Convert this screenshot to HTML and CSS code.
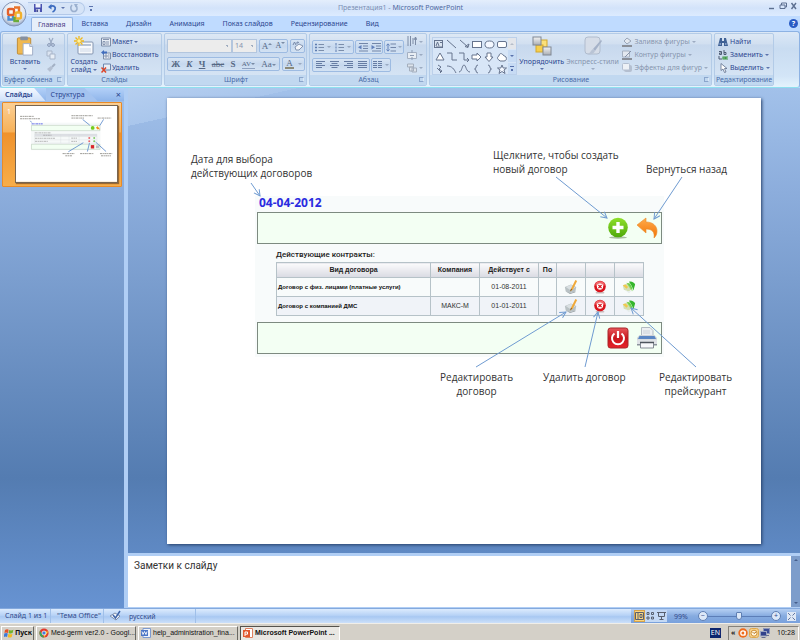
FILE: index.html
```html
<!DOCTYPE html>
<html lang="ru">
<head>
<meta charset="utf-8">
<title>Презентация1 - Microsoft PowerPoint</title>
<link rel="stylesheet" href="styles.css">
</head>
<body>
<svg class="defs" width="0" height="0" aria-hidden="true">
  <defs>
    <linearGradient id="gGreen" x1="0" y1="0" x2="0" y2="1"><stop offset="0" stop-color="#8fe02a"/><stop offset="1" stop-color="#4fa80a"/></linearGradient>
    <linearGradient id="gOrange" x1="0" y1="0" x2="0" y2="1"><stop offset="0" stop-color="#ffab4c"/><stop offset="1" stop-color="#f27405"/></linearGradient>
    <linearGradient id="gRed" x1="0" y1="0" x2="0" y2="1"><stop offset="0" stop-color="#e8585c"/><stop offset=".5" stop-color="#c8161c"/><stop offset="1" stop-color="#e8242a"/></linearGradient>
    <radialGradient id="gOrb" cx=".5" cy=".35" r=".65"><stop offset="0" stop-color="#ffffff"/><stop offset=".7" stop-color="#dfe5ef"/><stop offset="1" stop-color="#93a5c4"/></radialGradient>
    <linearGradient id="gGrey" x1="0" y1="0" x2="0" y2="1"><stop offset="0" stop-color="#f4f4f4"/><stop offset="1" stop-color="#a9adb3"/></linearGradient>
    <marker id="tip" viewBox="0 0 8 8" refX="7" refY="4" markerWidth="8" markerHeight="8" markerUnits="userSpaceOnUse" orient="auto"><path d="M1 0.8 7 4 1 7.2" fill="none" stroke="#6f9bd1" stroke-width="1"/></marker>
    <symbol id="edit" viewBox="0 0 16 16"><path d="M1 8 8 5l6 3-1 5-7 2-4-2z" fill="#b9c1c4"/><path d="M2 8 8 5.500l5 3-6 3z" fill="#d9dfe2"/><path d="M2 13l5 2 6-2v1l-6 2z" fill="#8f989c"/><path d="M13 0 8 10l-1 3 3-2L15 1z" fill="#f0a838"/><path d="M8 10l-1 3 2-2z" fill="#504030"/></symbol>
    <symbol id="del" viewBox="0 0 16 16"><ellipse cx="8" cy="14.500" rx="5" ry="1" fill="#c9baba"/><circle cx="8" cy="7.500" r="6.600" fill="#d9131d"/><path d="M2.500 6a5.600 5.600 0 0 1 11 0c-3 2-8 2-11 0z" fill="#f0676c"/><circle cx="8" cy="7.500" r="3.600" fill="#fff"/><path d="M6.200 5.700l3.600 3.600M9.800 5.700 6.200 9.300" stroke="#d9131d" stroke-width="1.400"/></symbol>
    <symbol id="price" viewBox="0 0 16 16"><path d="M1 6 6 4l6 5-4 4-6-2z" fill="#d3dfb4"/><path d="M1 6l3-1 3 3-2 2z" fill="#f2c84c"/><path d="M5 3l4 1 2 9-3-5z" fill="#9fd46b"/><path d="M8 2c3-1 6 1 7 3l-2 7c-1-4-3-7-5-10z" fill="#35b52d"/><path d="M6 4c3-1 6 3 6 9C10 9 8 6 6 4z" fill="#67d24a"/><path d="M4 12l4 1 3-1-3 3z" fill="#e5ecec"/></symbol>
    <symbol id="wflag" viewBox="0 0 10 10"><path d="M1 2q2-1.500 3.600-.3L4 5Q2 4 .4 5z" fill="#e5532a"/><path d="M5.200 2q2 1 4.200-.3L8.600 5q-2 1-4-.1z" fill="#6fb32c"/><path d="M.3 5.500q2-1 3.500 0L3 9Q1.500 8-.2 9z" fill="#3a78d8"/><path d="M4.400 5.700q2 1 4.100 0L7.700 9Q5.500 10 3.700 9z" fill="#f3bb22"/></symbol>
  </defs>
</svg>

<div class="app">
  <header class="titlebar">
    <div class="quick">
      <button aria-label="Сохранить"><svg width="10" height="10" viewBox="0 0 10 10"><path d="M1 1h8v8H1z" fill="#4a53b0"/><path d="M2.500 1h5v3.500h-5z" fill="#eef2fc"/><path d="M3 6h4v3H3z" fill="#cfd6ee"/><path d="M3.500 6.500h1.300V9H3.500z" fill="#27307c"/></svg></button>
      <button aria-label="Отменить"><svg width="10" height="10" viewBox="0 0 10 10"><path d="M3 3.500C7 2 9 4 8 6.500 7.500 8 6.500 8.600 5.500 9" fill="none" stroke="#3d6cc0" stroke-width="1.800"/><path d="M1 4 4.500 1v5.500z" fill="#3d6cc0"/></svg></button>
      <i class="caret"></i>
      <button aria-label="Повторить"><svg width="10" height="10" viewBox="0 0 10 10"><path d="M3 2C1 4 1.500 8.500 5 8.500S9 4 6.500 2.500" fill="none" stroke="#9bb0cf" stroke-width="1.600"/><path d="M5 1h4L6.500 4.500z" fill="#9bb0cf"/></svg></button>
    </div>
    <i class="caret bar"></i>
    <h1>Презентация1 - <b>Microsoft PowerPoint</b></h1>
    <div class="winbtns">
      <button aria-label="Свернуть"><svg width="8" height="8" viewBox="0 0 8 8"><path d="M1 6.500h5" stroke="#5c6f90" stroke-width="1.400"/></svg></button>
      <button aria-label="Восстановить окно"><svg width="8" height="8" viewBox="0 0 8 8"><path d="M2.500 3V1h5v4H6M1 3h5v3.500H1z" fill="none" stroke="#5c6f90"/></svg></button>
      <button aria-label="Закрыть"><svg width="8" height="8" viewBox="0 0 8 8"><path d="M1.500 1l4.500 6M6 1 1.500 7" stroke="#5c6f90" stroke-width="1.400"/></svg></button>
    </div>
  </header>

  <button class="orb" aria-label="Кнопка Office"><svg width="26" height="26" viewBox="0 0 26 26"><circle cx="13" cy="13" r="12" fill="url(#gOrb)" stroke="#8496b8"/><g fill="none" stroke-width="2.400"><rect x="7" y="8" width="6" height="6" rx="1.500" stroke="#e2602b"/><path d="M13 6.500h5V12" stroke="#e8742a"/><rect x="14.500" y="11.500" width="5.500" height="6" rx="1.500" stroke="#f1b02c"/><path d="M7.500 15v3.500H12V15" stroke="#4a8bd0"/><path d="M13.500 16v4H18" stroke="#6bab3a"/></g></svg></button>

  <nav class="tabs">
    <a class="on" href="#">Главная</a><a href="#">Вставка</a><a href="#">Дизайн</a><a href="#">Анимация</a><a href="#">Показ слайдов</a><a href="#">Рецензирование</a><a href="#">Вид</a>
    <button class="help" aria-label="Справка">?</button>
  </nav>

  <div class="ribbon">
    <section class="group g-clip">
      <div class="body">
        <button class="big"><svg width="18" height="21" viewBox="0 0 18 21"><rect x="1" y="2" width="14" height="17" rx="1" fill="#efb850" stroke="#c08a34"/><rect x="4" y="0.500" width="8" height="4" rx="1" fill="#8690a0"/><path d="M7 8h7l3 3v9H7z" fill="#fff" stroke="#a0aec6"/><path d="M14 8v3h3" fill="#dce4f2" stroke="#a0aec6"/></svg><span>Вставить</span><i class="caret"></i></button>
        <div class="stack off">
          <button aria-label="Вырезать"><svg width="10" height="10" viewBox="0 0 10 10"><path d="M3 1l3 6M7 1 4 7" stroke="#9aa9c2" stroke-width="1.200"/><circle cx="3" cy="8" r="1.400" fill="none" stroke="#8898b5"/><circle cx="7" cy="8" r="1.400" fill="none" stroke="#8898b5"/></svg></button>
          <button aria-label="Копировать"><svg width="10" height="10" viewBox="0 0 10 10"><path d="M1 1h5v5H1z" fill="#dbe4f1" stroke="#a8b5c9"/><path d="M4 4h5v5H4z" fill="#e8eef6" stroke="#a8b5c9"/></svg></button>
          <button aria-label="Формат по образцу"><svg width="10" height="10" viewBox="0 0 10 10"><path d="M9 1 6 4" stroke="#a3b0c5" stroke-width="2"/><path d="M1 6l4-3 2 2-3 4z" fill="#b3bfd1"/></svg></button>
        </div>
      </div>
      <h2>Буфер обмена<i class="launch"></i></h2>
    </section>

    <section class="group g-slides">
      <div class="body">
        <button class="big"><svg width="20" height="20" viewBox="0 0 20 20"><rect x="4" y="6" width="15" height="12" rx="1" fill="#f7f9fc" stroke="#8495b0"/><path d="M6 8h11v2H6z" fill="#b6c3d6"/><path d="M6 12h11v4H6z" fill="#e2e8f1"/><path d="M5 0v10M0 5h10M1.500 1.500l7 7M8.500 1.500l-7 7" stroke="#f0b81c" stroke-width="1.300"/><circle cx="5" cy="5" r="1.800" fill="#fff3a0"/></svg><span>Создать<br>слайд <i class="caret"></i></span></button>
        <div class="stack">
          <button><svg width="10" height="10" viewBox="0 0 10 10"><path d="M.5 1h9v8h-9z" fill="#e8edf5" stroke="#7d8da8"/><path d="M2 2.500h6M2 4.500h2v3H2zM5 5h3M5 7h3" stroke="#8796b0" fill="none"/></svg>Макет <i class="caret"></i></button>
          <button><svg width="10" height="10" viewBox="0 0 10 10"><path d="M2.500 3h7v6h-7z" fill="#e8edf5" stroke="#7d8da8"/><path d="M4 5h2v2H4zM7 5h1.500M7 7h1.500" stroke="#8796b0" fill="none"/><path d="M0 2.500 3 0v1.500h3v2H3V5z" fill="#416dbd"/></svg>Восстановить</button>
          <button><svg width="10" height="10" viewBox="0 0 10 10"><path d="M2.500 1h7v6h-7z" fill="#e8edf5" stroke="#6d86ae"/><path d="M.5 4.500l4.500 5M5 4.500l-4.500 5" stroke="#dd4326" stroke-width="1.500"/></svg>Удалить</button>
        </div>
      </div>
      <h2>Слайды</h2>
    </section>

    <section class="group g-font">
      <div class="rows off">
        <div class="row">
          <select class="face" aria-label="Шрифт"><option></option></select><select class="size" aria-label="Размер шрифта"><option>14</option></select>
          <span class="set wide"><button class="ser">A<i class="caret up"></i></button><button class="ser sm">A<i class="caret"></i></button></span>
          <span class="set"><button aria-label="Очистить формат"><svg width="12" height="10" viewBox="0 0 12 10"><path d="M3 6l4-3 4 2-4 4H4z" fill="#f2f5fa" stroke="#8494b0"/><path d="M1 4l1.500-3L4 4M5 3V1l2 .5" fill="none" stroke="#7587a8"/></svg></button></span>
        </div>
        <div class="row">
          <span class="set style"><button class="ser"><b>Ж</b></button><button class="ser"><b><em>К</em></b></button><button class="ser"><b><u>Ч</u></b></button><button class="ser"><s>abe</s></button><button class="ser"><b>S</b></button><button class="ser tiny">AV<i class="caret"></i></button><button class="ser">Aa<i class="caret"></i></button></span>
          <span class="set color"><button class="ser"><span class="ink">A</span></button><i class="caret"></i></span>
        </div>
      </div>
      <h2>Шрифт<i class="launch"></i></h2>
    </section>

    <section class="group g-para">
      <div class="body off">
        <div class="rows">
          <div class="row">
            <span class="set w42"><button aria-label="Маркеры"><svg width="9" height="9" viewBox="0 0 9 9"><path d="M0 1.500h2M0 4.500h2M0 7.500h2" stroke="#5e7cb0" stroke-width="1.600"/><path d="M3.500 1.500H9M3.500 4.500H9M3.500 7.500H9" stroke="#7b8eab"/></svg></button><i class="caret"></i><button aria-label="Нумерация"><svg width="9" height="9" viewBox="0 0 9 9"><path d="M1 0v2.500M1 3.500v2M1 6.500V9" stroke="#5e7cb0"/><path d="M3.500 1.500H9M3.500 4.500H9M3.500 7.500H9" stroke="#7b8eab"/></svg></button><i class="caret"></i></span>
            <span class="set w28"><button aria-label="Уменьшить отступ"><svg width="10" height="9" viewBox="0 0 10 9"><path d="M1 .5h9M5 3h5M5 5.500h5M1 8h9" stroke="#7286a8"/><path d="M0 4.200 3.500 2v4.500z" fill="#6181bb"/></svg></button><button aria-label="Увеличить отступ"><svg width="10" height="9" viewBox="0 0 10 9"><path d="M1 .5h9M5 3h5M5 5.500h5M1 8h9" stroke="#7286a8"/><path d="M4 4.200.5 2v4.500z" fill="#6181bb"/></svg></button></span>
            <span class="set w20"><button aria-label="Интервал"><svg width="10" height="9" viewBox="0 0 10 9"><path d="M4.500 1H10M4.500 4.500H10M4.500 8H10" stroke="#7286a8"/><path d="M2 1v7M.5 2.500 2 .8l1.500 1.700M.5 6.500 2 8.200l1.500-1.700" fill="none" stroke="#6181bb"/></svg></button><i class="caret"></i></span>
          </div>
          <div class="row">
            <span class="set w58"><button aria-label="По левому краю"><svg width="9" height="8" viewBox="0 0 9 8"><path d="M0 .5h9M0 2.500h6M0 4.500h9M0 6.500h6" stroke="#667ca3"/></svg></button><button aria-label="По центру"><svg width="9" height="8" viewBox="0 0 9 8"><path d="M0 .5h9M1.500 2.500h6M0 4.500h9M1.500 6.500h6" stroke="#667ca3"/></svg></button><button aria-label="По правому краю"><svg width="9" height="8" viewBox="0 0 9 8"><path d="M0 .5h9M3 2.500h6M0 4.500h9M3 6.500h6" stroke="#667ca3"/></svg></button><button aria-label="По ширине"><svg width="9" height="8" viewBox="0 0 9 8"><path d="M0 .5h9M0 2.500h9M0 4.500h9M0 6.500h9" stroke="#667ca3"/></svg></button></span>
            <span class="set w20"><button aria-label="Колонки"><svg width="9" height="8" viewBox="0 0 9 8"><path d="M0 .5h4M0 2.500h4M0 4.500h4M0 6.500h4M5 .5h4M5 2.500h4M5 4.500h4M5 6.500h4" stroke="#667ca3"/></svg></button><i class="caret"></i></span>
          </div>
        </div>
        <div class="stack">
          <button aria-label="Направление текста"><svg width="10" height="11" viewBox="0 0 10 11"><path d="M1 0v10M3.500 0v10M6 2v6M8.500 1v8M7 4l1.500-3L10 4" fill="none" stroke="#7d8ca6"/></svg><i class="caret"></i></button>
          <button aria-label="Выровнять текст"><svg width="10" height="10" viewBox="0 0 10 10"><path d="M.5 2.500h9v6h-9z" fill="#e8edf3" stroke="#a4b0c2"/><path d="M5 0v3M5 7v3M3 5.500h4" stroke="#8c9bb3"/></svg><i class="caret"></i></button>
          <button aria-label="SmartArt"><svg width="10" height="10" viewBox="0 0 10 10"><path d="M.5 1h6v3h-6zM2.500 4h4v4h-4zM5 5h4.500v4H5z" fill="#dde4ec" stroke="#a4aebd"/></svg><i class="caret"></i></button>
        </div>
      </div>
      <h2>Абзац<i class="launch"></i></h2>
    </section>

    <section class="group g-draw">
      <div class="body">
        <div class="gallery">
          <svg width="75" height="37" viewBox="0 0 75 37" fill="none" stroke="#66748e" role="img" aria-label="Фигуры"><rect x="1.500" y="2.500" width="8" height="7" fill="#dce6f2"/><path d="M3 8l1.500-4L6 8M7 4.500h2M3 9h6M14 2l9 8M27 2l8 7M35 9.500l1-3.500-4 2.500z"/><rect x="39.500" y="3.500" width="9" height="6" fill="#fff"/><ellipse cx="56.500" cy="6.500" rx="4.500" ry="3.500" fill="#f4f8ff"/><rect x="64.500" y="3.500" width="9" height="6" rx="1.500" fill="#fff"/><path d="M3 22l4-7 4 7z" fill="#fff"/><path d="M14 15h5v7h5M26 15h5v7h4M34 20l2 2-2 2"/><path d="M39 17h5v-2l4 4-4 4v-2h-5z" fill="#fff"/><path d="M54 15h4v4h2l-4 4.500-4-4.500h2z" fill="#fff"/><path d="M66 22c-2-1-2-3 0-4 0-3 3-3 4-1l3 2c1 2 0 4-2 4h-4z" fill="#fff"/><path d="M5 27l3 2-2 2 3 2-2 2M4 30l4 4M14 28c5 0 7 3 9 7M26 34c3 0 3-7 5-7s2 7 6 7M45 27c-3 0-1 4-3.500 4 2.500 0 .5 4 3.500 4M55 27c3 0 1 4 3.500 4-2.500 0-.5 4-3.500 4"/><path d="M69 27l1.200 3h3.300l-2.500 2 1 3.500-3-2-3 2 1-3.500-2.500-2h3.300z" fill="#f4f8ff"/></svg>
          <div class="scroll"><button aria-label="Вверх"><i class="caret up"></i></button><button aria-label="Вниз"><i class="caret"></i></button><button aria-label="Ещё"><i class="caret bar"></i></button></div>
        </div>
        <button class="big"><svg width="20" height="20" viewBox="0 0 20 20"><rect x="8" y="4" width="7" height="7" fill="#fbe07a" stroke="#d2a72f"/><rect x="4" y="9" width="7" height="7" fill="#f7cf4c" stroke="#d2a72f"/><rect x="1" y="1" width="8" height="8" fill="url(#gGrey)" stroke="#808894"/><rect x="11" y="11" width="8" height="8" fill="url(#gGrey)" stroke="#808894"/></svg><span>Упорядочить</span><i class="caret"></i></button>
        <button class="big off"><svg width="20" height="20" viewBox="0 0 20 20"><rect x="2" y="1" width="15" height="17" rx="3" fill="#d6dde8" stroke="#b0bccd"/><path d="M18 4l1 1-7 10-2-2z" fill="#a5b2c8"/><path d="M10 13l2 2c-1 3-5 4-8 3 3 0 4-4 6-5z" fill="#b9c4d5"/></svg><span>Экспресс-стили</span><i class="caret"></i></button>
        <div class="stack off">
          <button><svg width="10" height="10" viewBox="0 0 10 10"><path d="M2 4l3-3 4 3-4 3z" fill="#e3e8ef" stroke="#9aa6b8"/><path d="M0 8h10v2H0z" fill="#8a8f98"/></svg>Заливка фигуры <i class="caret"></i></button>
          <button><svg width="10" height="10" viewBox="0 0 10 10"><path d="M.5 1h7v6h-7z" fill="#e3e8ef" stroke="#a5b0c0"/><path d="M9 1 3 7" stroke="#8592a8"/><path d="M0 8h10v2H0z" fill="#8a8f98"/></svg>Контур фигуры <i class="caret"></i></button>
          <button><svg width="10" height="10" viewBox="0 0 10 10"><rect x="2" y="2" width="8" height="7" rx="2" fill="#b4bfd0"/><rect x=".5" y=".5" width="7" height="6.500" rx="1" fill="#eef1f6" stroke="#b4bfd0"/></svg>Эффекты для фигур <i class="caret"></i></button>
        </div>
      </div>
      <h2>Рисование<i class="launch"></i></h2>
    </section>

    <section class="group g-edit">
      <div class="body">
        <div class="stack">
          <button><svg width="10" height="10" viewBox="0 0 10 10"><path d="M2 1h2v3h2V1h2l2 8H6V6H4v3H0z" fill="#3f6195"/><path d="M1.500 7h1.500M7 7h1.500" stroke="#c5d8f5"/></svg>Найти</button>
          <button><svg width="10" height="10" viewBox="0 0 10 10"><path d="M1 1.500h2.500v3H1.500V3h2M6 0v4.500h2V2.500H6" fill="none" stroke="#4d5b73"/><path d="M1 6v3h3" fill="none" stroke="#4d5b73"/><path d="M5 7h2v2H5zM10 7H8v2h2" fill="none" stroke="#3f9a46" stroke-width="1.200"/></svg>Заменить <i class="caret"></i></button>
          <button><svg width="10" height="10" viewBox="0 0 10 10"><path d="M3 .5v7L5 6l1.500 3.500L8 9 6.500 5.500H9z" fill="#fff" stroke="#5d6d8c" stroke-width=".8"/></svg>Выделить <i class="caret"></i></button>
        </div>
      </div>
      <h2>Редактирование</h2>
    </section>
  </div>

  <main class="work">
    <aside class="outline">
      <div class="panes">
        <button class="on">Слайды</button><button>Структура</button>
        <button class="close" aria-label="Закрыть панель">×</button>
      </div>
      <div class="thumb">
        <span>1</span>
        <svg viewBox="0 0 594 446" role="img" aria-label="Слайд 1">
          <rect width="594" height="446" fill="#fff"/><rect x="88" y="98" width="409" height="162" fill="#f6f9f9"/>
          <g fill="#f2fff2" stroke="#b4c8b4" stroke-width="3"><path d="M91 114h403v31H91zM91 225h403v30H91z"/></g>
          <path d="M110 165h366v14H110z" fill="#dddfe4"/><path d="M110 165h366v53H110zM110 180h366M110 199h366M263 165v53M312 165v53M371 165v53" fill="none" stroke="#d6dade" stroke-width="2"/>
          <g stroke-width="5" stroke-dasharray="13 3 7 3"><path d="M24 61h82M24 75h120M326 57h125M326 71h74M480 71h80M274 280h70M290 293h40M377 280h80M494 280h72M500 293h58" stroke="#8c8a84"/><path d="M92 105h66" stroke="#4a55e8"/><path d="M110 158h96M160 172h50M112 190h120M112 208h75M325 189h34M325 208h34" stroke="#999" stroke-width="4"/></g>
          <g stroke="#5f8dcc" stroke-width="5"><path d="M84 87l8 10M392 79l42 34M515 79l-22 36M308 269l88-53M420 268l12-50M530 268l-62-56"/></g>
          <circle cx="451" cy="129" r="11" fill="#74cc1c"/><path d="M470 128l12-10v6q12 4 9 18-5-8-9-7v5z" fill="#f68a1c"/><path d="M440 230h20v20h-20z" fill="#d8242a"/><path d="M470 232h18v16h-18z" fill="#b8bec4"/>
          <g fill="#e8686c"><circle cx="431" cy="188" r="6"/><circle cx="431" cy="207" r="6"/></g><g fill="#7fcc6a"><circle cx="460" cy="188" r="6"/><circle cx="460" cy="207" r="6"/></g>
        </svg>
      </div>
    </aside>

    <div class="editor">
      <div class="stage">
        <article class="slide">
          <div class="shot">
            <p class="date">04-04-2012</p>
            <div class="bar">
              <svg width="22" height="22" viewBox="0 0 22 22"><ellipse cx="11" cy="20.500" rx="9" ry="1.200" fill="#a9bda0"/><circle cx="11" cy="10.500" r="9.800" fill="url(#gGreen)"/><path d="M11 5v11M5.500 10.500h11" stroke="#fff" stroke-width="3.400"/></svg>
              <svg width="22" height="22" viewBox="0 0 22 22"><path d="M1 8 10 1v4c7 0 11 4 11 9 0 3-1 5-3 7 1-6-2-9-8-9v4z" fill="url(#gOrange)" stroke="#ea8a2a" stroke-width=".6"/></svg>
            </div>
            <table>
              <caption>Действующие контракты:</caption>
              <thead><tr><th class="kind">Вид договора</th><th class="firm">Компания</th><th class="from">Действует с</th><th class="to">По</th><th class="act"></th><th class="act"></th><th class="act"></th></tr></thead>
              <tbody>
                <tr><td class="name">Договор с физ. лицами (платные услуги)</td><td></td><td>01-08-2011</td><td></td><td><svg><use href="#edit"/></svg></td><td><svg><use href="#del"/></svg></td><td><svg><use href="#price"/></svg></td></tr>
                <tr><td class="name">Договор с компанией ДМС</td><td>МАКС-М</td><td>01-01-2011</td><td></td><td><svg><use href="#edit"/></svg></td><td><svg><use href="#del"/></svg></td><td><svg><use href="#price"/></svg></td></tr>
              </tbody>
            </table>
            <div class="bar">
              <svg width="22" height="22" viewBox="0 0 22 22"><rect x="1" y="1" width="20" height="20" rx="2.500" fill="url(#gRed)" stroke="#a8262a"/><path d="M7.500 6.500a6 6 0 1 0 7 0" fill="none" stroke="#fff" stroke-width="2"/><path d="M11 4v7" stroke="#fff" stroke-width="2.200"/></svg>
              <svg width="22" height="22" viewBox="0 0 22 22"><path d="M5.500.5H14l3 3V11H5.500z" fill="#eceff2" stroke="#b3bac2"/><path d="M7 4h7M7 6h7" stroke="#ccd2d8"/><path d="M3.500 8 1 11v6h20v-6l-2.500-3z" fill="#cfd3d8"/><path d="M3.500 9h15l1.500 3H2z" fill="#5a86c4"/><path d="M1 12.500h20V18H1z" fill="#dfe2e6"/><path d="M1 17h20v1.500H1z" fill="#8b929b"/><path d="M4.500 15.500h13V21h-13z" fill="#f7f8fa" stroke="#848b94"/><path d="M4 15.500h14" stroke="#4d545c" stroke-width="1.500"/></svg>
            </div>
          </div>
          <p class="note n1">Дата для выбора<br>действующих договоров</p>
          <p class="note n2">Щелкните, чтобы создать<br>новый договор</p>
          <p class="note n3">Вернуться назад</p>
          <p class="note mid n4">Редактировать<br>договор</p>
          <p class="note mid n5">Удалить договор</p>
          <p class="note mid n6">Редактировать<br>прейскурант</p>
          <svg class="arrows" width="594" height="446" viewBox="0 0 594 446" fill="none" stroke="#6f9bd1"><g marker-end="url(#tip)"><path d="M84 85 93 98" /><path d="M389 79 440 120"/><path d="M515 79 487 121"/><path d="M309 269 399 214"/><path d="M418 269 431 214"/><path d="M529 269 464 210"/></g></svg>
        </article>
      </div>
      <div class="notes"><textarea aria-label="Заметки">Заметки к слайду</textarea><div class="vbar"><i class="caret up"></i><i class="caret"></i></div></div>
    </div>
  </main>

  <footer class="status">
    <span class="s1">Слайд 1 из 1</span><span class="s2">"Тема Office"</span>
    <span class="s3"><svg width="12" height="12" viewBox="0 0 12 12"><path d="M1 6l5-3 5 3-4 4z" fill="#f0f4fa" stroke="#7f8fac"/><path d="M4 5l2.500 3L11 1" fill="none" stroke="#3d63a8" stroke-width="1.500"/></svg>русский</span>
    <div class="view">
      <button class="on" aria-label="Обычный"><svg width="9" height="8" viewBox="0 0 9 8"><path d="M.5.5h8v7h-8zM3 .5v7M5 2.500h2v3H5z" fill="none" stroke="#59606e"/></svg></button>
      <button aria-label="Сортировщик"><svg width="9" height="8" viewBox="0 0 9 8"><path d="M1 .5h2v2H1zM5.500.5h2v2h-2zM1 5h2v2H1zM5.500 5h2v2h-2z" fill="none" stroke="#59606e"/></svg></button>
      <button aria-label="Показ"><svg width="9" height="8" viewBox="0 0 9 8"><path d="M0 .5h9M1.500 1v3.500h6V1M4.500 4.500V7M2.500 7.500h4" fill="none" stroke="#59606e"/></svg></button>
      <span class="pct">99%</span>
      <button class="round" aria-label="Уменьшить">−</button>
      <input type="range" aria-label="Масштаб" value="49">
      <button class="round" aria-label="Увеличить">+</button>
      <button class="fit" aria-label="Вписать"><svg width="9" height="9" viewBox="0 0 9 9"><path d="M0 0h9v9H0z" fill="#dfe8f5"/><path d="M1 1l2.500 2.500M8 1 5.500 3.500M1 8l2.500-2.500M8 8 5.500 5.500" stroke="#6074a0"/></svg></button>
    </div>
  </footer>

  <div class="taskbar">
    <button class="start"><svg width="10" height="10"><use href="#wflag"/></svg>Пуск</button>
    <button class="task"><svg width="10" height="10" viewBox="0 0 10 10"><circle cx="5" cy="5" r="4.600" fill="#e33b2e"/><path d="M1 2.800 5 9.600A4.600 4.600 0 0 1 1 2.800z" fill="#3aa757"/><path d="M5 9.600 9.400 3.500H5z" fill="#f9c52b"/><circle cx="5" cy="5" r="2" fill="#3f7de0" stroke="#fff" stroke-width=".7"/></svg><span>Med-germ ver2.0 - Googl...</span></button>
    <button class="task"><svg width="10" height="10" viewBox="0 0 10 10"><path d="M2 .5h7.500v9H2z" fill="#eef3fb" stroke="#7e9bd0"/><path d="M0 2h7v6H0z" fill="#4b76c6"/><path d="M1 3.500l1 3 1.500-3 1.500 3 1-3" fill="none" stroke="#fff" stroke-width=".9"/></svg><span>help_administration_fina...</span></button>
    <button class="task on"><svg width="10" height="10" viewBox="0 0 10 10"><path d="M2.500.5h7v9h-7z" fill="#fff" stroke="#e0805f"/><path d="M0 2h7v7H0z" fill="#e2562e"/><path d="M2 8V4h2.500v2.200H2" fill="none" stroke="#fff"/></svg><span>Microsoft PowerPoint ...</span></button>
    <span class="lang">EN</span>
    <div class="tray">
      <b>«</b>
      <svg width="10" height="10" viewBox="0 0 10 10"><circle cx="5" cy="5" r="4.700" fill="#ee6b1d"/><circle cx="5" cy="5" r="2.200" fill="none" stroke="#fff" stroke-width="1.300"/><path d="M7 3v4.500" stroke="#fff"/></svg>
      <svg width="10" height="10" viewBox="0 0 10 10"><rect x=".5" y=".5" width="9" height="9" rx="2" fill="#f5d08a" stroke="#e0a84c"/><circle cx="5" cy="5.200" r="3" fill="#fff6e0" stroke="#d39338"/><path d="M3.500 4 5 5.500 7 4" fill="none" stroke="#b87522"/></svg>
      <svg width="10" height="10" viewBox="0 0 10 10"><rect x="3.500" y=".5" width="6" height="5" fill="#3b4d96" stroke="#8c96b8"/><rect x=".5" y="3.500" width="6" height="4.500" fill="#31418a" stroke="#9aa3c0"/><path d="M1.500 9.500h4M6 7.500h3" stroke="#687090"/></svg>
      <time>10:28</time>
    </div>
  </div>
</div>
</body>
</html>
```
FILE: styles.css
```css
* { box-sizing: border-box; }
body { margin: 0; font: 7px/8px "Noto Sans", "Open Sans", sans-serif; color: #2b468f; }
button, select, input, textarea { font: inherit; color: inherit; margin: 0; padding: 0; border: 0; background: none; border-radius: 0; }
a { color: inherit; text-decoration: none; }
h1, h2, p { margin: 0; font: inherit; }
svg { display: block; flex: none; }
.defs { position: absolute; }

.app { position: relative; display: flex; flex-direction: column; min-height: 100vh; background: #bfdbff; }

.caret { display: inline-block; flex: none; width: 0; height: 0; border: 2px solid transparent; border-top-color: currentColor; border-bottom: 0; vertical-align: middle; opacity: .7; }
.caret.up { border-top: 0; border-bottom: 2px solid currentColor; }
.caret.bar { width: 4px; height: 5px; border: 0; border-top: 1px solid; background: linear-gradient(currentColor, currentColor) center bottom / 2px 2px no-repeat; }

/* title bar */
.titlebar { display: flex; align-items: center; height: 16px; padding: 0 2px 0 28px; background: linear-gradient(#e4eefc, #d3e3fa 50%, #dcebff); }
.quick { display: flex; align-items: center; gap: 4px; height: 13px; padding: 0 5px; border: 1px solid #b2c8e8; border-left: 0; border-radius: 0 7px 7px 0; background: #d6e4f7; }
.titlebar > .caret { margin-left: 4px; }
.titlebar h1 { flex: 1; padding-right: 60px; text-align: center; color: #7c8fb3; }
.titlebar h1 b { font-weight: 400; color: #5069a0; }
.winbtns { display: flex; gap: 3px; align-self: start; padding-top: 2px; }
.orb { position: absolute; left: 1px; top: 1px; z-index: 1; }

/* tabs */
.tabs { display: flex; height: 15px; padding: 1px 2px 0 31px; }
.tabs a { padding: 0 9px; line-height: 14px; }
.tabs a.on { padding: 0 6px; background: #e6effa; border: 1px solid #8fb1e0; border-bottom: 0; border-radius: 2px 2px 0 0; line-height: 13px; color: #4c3e86; }
.help { width: 9px; height: 9px; margin: 2px 0 0 auto; border-radius: 50%; background: #2a5bc4; color: #fff; font-weight: 700; }

/* ribbon */
.ribbon { display: flex; gap: 2px; height: 57px; padding: 1px; border: 1px solid #8db2e3; border-bottom-color: #8ee0ee; border-radius: 3px; background: linear-gradient(#dce8f6, #c9dcf1 30%, #d3e5f7 80%, #e4f3fd); }
.group { display: flex; flex-direction: column; flex: none; border: 1px solid #b3cbe7; border-radius: 2px; background: linear-gradient(#dde8f5, #d1dff0 20%, #c7d8ed 21%, #d9e7f6); }
.g-clip { width: 63px; }
.g-slides { width: 95px; }
.g-font { width: 143px; }
.g-para { width: 118px; }
.g-draw { width: 283px; }
.g-edit { width: 60px; }
.group h2 { display: flex; justify-content: center; height: 10px; line-height: 9px; background: #c1d8f0; color: #4a6ca8; white-space: nowrap; }
.launch { width: 5px; height: 5px; margin: 2px 2px 0 auto; border: 1px solid #8ba6cc; border-right-color: #dbe8f7; }
.group h2:has(.launch) { padding-left: 1px; }
.g-font h2:has(.launch), .g-para h2:has(.launch), .g-draw h2:has(.launch) { display: grid; grid-template-columns: 1fr auto 1fr; }
.g-font h2::before, .g-para h2::before, .g-draw h2::before { content: ""; }
.body { display: flex; flex: 1; padding: 1px 1px 0; }
.big { display: flex; flex-direction: column; align-items: center; padding: 1px 2px 0; white-space: nowrap; }
.big > svg { height: 20px; margin-bottom: 2px; }
.big > .caret { margin-top: 2px; }
.stack { display: flex; flex-direction: column; justify-content: space-around; align-items: start; flex: 1; padding: 0 2px; }
.stack button { display: flex; align-items: center; gap: 2px; height: 10px; white-space: nowrap; }
.off { color: #8695ae; }
.g-clip .big { width: 42px; }
.g-clip .stack { padding: 0; }
.g-slides .big { width: 30px; }
.g-slides .stack button { gap: 1px; }
.rows { display: flex; flex: 1; flex-direction: column; gap: 4px; padding: 5px 1px 0 2px; }
.row { display: flex; gap: 2px; height: 14px; }
.row select { appearance: none; height: 14px; border: 1px solid #b3c6de; background: linear-gradient(45deg, transparent 50%, #a0adc0 0) right 3px center / 3px 2px no-repeat #ececec; }
.face { width: 65px; margin-right: -2px; }
.row .size { width: 25px; padding-left: 2px; }
.set { display: flex; align-items: center; justify-content: space-around; flex: 1; border: 1px solid #9dbbe2; border-radius: 2px; background: linear-gradient(#d8e5f4, #c6d8ee 50%, #d3e2f3); }
.set.wide { flex: 0 0 29px; }
.set.style { flex: 0 0 113px; }
.w42 { flex: 0 0 42px; }
.w28 { flex: 0 0 28px; }
.w20 { flex: 0 0 20px; }
.w58 { flex: 0 0 58px; }
.ser { font-family: "Liberation Serif", serif; font-size: 9px; line-height: 10px; color: #566884; white-space: nowrap; }
.wide .caret { vertical-align: 4px; }
.sm { font-size: 8px; }
.tiny { font-size: 7px; border-bottom: 1px solid #8fa2c0; line-height: 8px; }
.ink { display: block; width: 9px; border-bottom: 2px solid #8c8a78; line-height: 8px; }
.g-para .rows { flex: none; padding: 5px 1px 0; }
.g-para .row { gap: 1px; }
.gallery { display: flex; width: 86px; height: 38px; margin: 2px 2px 0 1px; border: 1px solid #bcd0ea; background: #d8e6f7; }
.scroll { display: flex; flex: 1; flex-direction: column; gap: 1px; }
.scroll button { display: flex; align-items: center; justify-content: center; flex: 1; background: #c7dbf4; }
.scroll button:first-child { background: #e3e6eb; color: #a3adbb; }
.g-draw .big { padding: 1px 1px 0; min-width: 44px; }
.g-draw .big.off { padding: 1px 2px 0; }

/* work area */
.work { display: flex; flex: 1; background: linear-gradient(#a2c1ea, #8caddc 20%, #547cb1 75%, #6793d2); }
.outline { flex: 0 0 128px; border-right: 4px solid #b0cef5; }
.panes { display: flex; height: 13px; padding-right: 3px; background: linear-gradient(#b3d0f8, #8fb5ea); }
.panes button { padding: 0 13px 0 5px; line-height: 12px; background: #a4c3ef; clip-path: polygon(0 0, 75% 0, 100% 100%, 0 100%); }
.panes button.on { background: linear-gradient(#f5f9ff, #cfe1fa); font-weight: 600; }
.panes button.close { margin-left: auto; padding: 0; background: none; clip-path: none; font-size: 9px; }
.thumb { display: flex; gap: 4px; margin: 1px 2px 0; padding: 2px 3px 3px 4px; border: 1px solid #e98b27; border-radius: 1px; background: linear-gradient(#fbcf94, #f7b158 35%, #ef922c 36%, #f7ad49); color: #fff; line-height: 14px; }
.thumb svg { flex: 1; width: 0; border: 1px solid #786550; box-shadow: 1px 1px 1px #9b6830; }

.editor { display: flex; flex: 1; flex-direction: column; min-width: 0; }
.stage { flex: 1; padding: 10px 39px 9px; background: linear-gradient(to bottom right, #b6cff0, #a9c6ec 50%, transparent 50%) 0 0 / 170px 38px no-repeat; }
.slide { position: relative; height: 100%; min-height: 446px; background: #fff; box-shadow: 1px 1px 3px #263f68; }
.note { position: absolute; font: 10px/14px "Open Sans", "Noto Sans", sans-serif; color: #333; white-space: nowrap; }
.mid { text-align: center; }
.n1 { left: 24px; top: 54px; }
.n2 { left: 326px; top: 50px; }
.n3 { left: 479px; top: 64px; }
.n4 { left: 273px; top: 272px; }
.n5 { left: 376px; top: 272px; }
.n6 { left: 492px; top: 272px; }
.arrows { position: absolute; left: 0; top: 0; }

.shot { position: absolute; left: 88px; top: 98px; width: 409px; padding: 0 2px 3px; background: #f8fbfb; }
.date { padding-left: 2px; font: 700 12px/13px "Open Sans", sans-serif; color: #2b2be0; }
.bar { display: flex; align-items: center; justify-content: flex-end; gap: 7px; height: 32px; padding-right: 3px; border: 1px solid #7d8a80; background: #f3fff3; }
.date + .bar { margin-top: 3px; }
.shot table { width: 368px; margin: 6px 0 6px 19px; border-collapse: collapse; table-layout: fixed; color: #333; }
.shot caption { padding: 0 0 2px; text-align: left; font: 500 8px/10px Roboto, sans-serif; color: #222; }
.shot th, .shot td { height: 19px; padding: 0 2px; border: 1px solid #b6c2c8; text-align: center; font-family: "Liberation Sans", sans-serif; font-size: 7px; white-space: nowrap; }
.shot th { height: 15px; background: linear-gradient(#fbfbfc, #d9dae2); color: #222; }
.shot tr:nth-child(2) td { background: #f0f3f8; }
.shot td.name { padding-left: 1px; text-align: left; font-weight: 700; font-size: 6px; color: #111; }
.shot td svg { width: 14px; height: 14px; margin: 0 auto; }
.kind { width: 154px; }
.firm { width: 49px; }
.from { width: 59px; }
.to { width: 18px; }

.notes { display: flex; height: 55px; border: solid #b0cef5; border-width: 3px 0 1px; background: #fff; }
.notes textarea { flex: 1; padding: 3px 6px; resize: none; outline: 0; font: 10px/14px Roboto, sans-serif; color: #333; }
.vbar { display: flex; flex-direction: column; justify-content: space-between; align-items: center; width: 9px; padding: 3px 0; background: #7d9dcb; color: #2f4472; }

/* status bar */
.status { display: flex; align-items: stretch; height: 15px; border-top: 1px solid #84a9dd; background: linear-gradient(#dcebfd, #b7d2f6 45%, #a8c8f2 55%, #cce0fa); line-height: 13px; color: #31498a; }
.status > span { border-right: 1px solid #9fbfe9; white-space: nowrap; }
.s1 { width: 51px; padding-left: 5px; }
.s2 { width: 53px; padding-left: 6px; }
.s3 { display: flex; align-items: center; gap: 8px; width: 92px; padding-left: 5px; }
.view { display: flex; align-items: center; width: 169px; margin-left: auto; padding: 0 4px 0 3px; background: linear-gradient(#b6d0f3, #86abe0 50%, #79a1dc); }
.view > button:not(.round):not(.fit) { display: flex; align-items: center; justify-content: center; width: 11px; height: 12px; background: #c4d9f5; }
.view > button.on:not(.round) { background: #fbd57e; border: 1px solid #d4a24c; }
.pct { width: 31px; padding-left: 7px; }
.round { flex: none; width: 10px; height: 10px; border: 1px solid #5f7fb3; border-radius: 50%; background: #dce8f8; line-height: 8px; text-align: center; }
.view input { appearance: none; flex: 1; min-width: 0; height: 10px; }
.view input::-webkit-slider-runnable-track { height: 1px; background: #dce8fa; border-bottom: 1px solid #5c7eb8; }
.view input::-webkit-slider-thumb { appearance: none; width: 6px; height: 8px; margin-top: -4px; border: 1px solid #5f7fb3; border-radius: 1px 1px 3px 3px; background: #dce8f8; }
.fit { margin-left: 6px; }

/* taskbar */
.taskbar { display: flex; align-items: center; gap: 2px; height: 18px; padding: 1px 1px 0; border-top: 1px solid #f0eee9; background: #d4d0c8; color: #111; }
.start, .task { display: flex; align-items: center; gap: 2px; height: 15px; padding: 0 2px; border: 1px solid; border-color: #fff #6b6963 #6b6963 #fff; white-space: nowrap; }
.start { width: 33px; gap: 1px; font-weight: 700; }
.task { width: 100px; font-family: "Liberation Sans", sans-serif; }
.task.on { border-color: #55534e #fff #fff #55534e; background: #e9e7e3; font-weight: 700; }
.lang { margin-left: auto; padding: 1px; background: #0c256e; color: #fff; }
.tray { display: flex; align-items: center; gap: 1px; width: 71px; height: 15px; margin-left: 5px; padding: 0 3px 0 2px; border: 1px solid; border-color: #85827b #fff #fff #85827b; }
.tray b { margin-right: 2px; }
.tray time { margin-left: auto; }
```
